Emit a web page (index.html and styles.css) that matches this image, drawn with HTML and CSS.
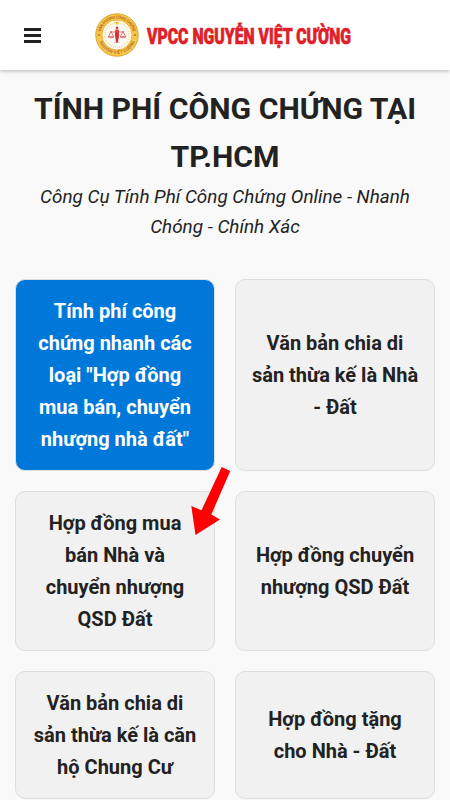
FILE: index.html
```html
<!DOCTYPE html>
<html lang="vi">
<head>
<meta charset="utf-8">
<meta name="viewport" content="width=device-width, initial-scale=1">
<title>Tính phí công chứng</title>
<link rel="stylesheet" href="styles.css">
</head>
<body>
<header class="header">
  <button class="menu" aria-label="Menu"><span></span><span></span><span></span></button>
  <a class="brand" href="#">
    <svg class="seal" viewBox="0 0 44 44">
      <defs>
        <path id="top" d="M5.600 22a16.400 16.400 0 0 1 32.800 0"/>
        <path id="bottom" d="M3.200 22a18.800 18.800 0 0 0 37.600 0"/>
      </defs>
      <circle cx="22" cy="22" r="21.200" fill="#f6c84c" stroke="#dda428" stroke-width="1"/>
      <circle cx="22" cy="22" r="15" fill="#fffdf5" stroke="#e2a52a" stroke-width=".8"/>
      <circle cx="22" cy="22" r="12.200" fill="none" stroke="#efe0a0" stroke-width="1.800" stroke-dasharray="1 1"/>
      <g class="seal-text">
        <text><textPath href="#top" startOffset="3" textLength="45">VĂN PHÒNG CÔNG CHỨNG</textPath></text>
        <text><textPath href="#bottom" startOffset="7" textLength="45">NGUYỄN VIỆT CƯỜNG</textPath></text>
      </g>
      <path d="M22 7.600l.7 1.600 1.700.1-1.300 1.100.4 1.700-1.500-.9-1.500.9.4-1.700-1.300-1.100 1.700-.1z" fill="#efc52f"/>
      <path d="M3 20.800l2.200 2.200M5.200 20.800L3 23M38.800 20.800l2.200 2.200m0-2.200L38.800 23" stroke="#b66a1d" stroke-width=".7"/>
      <g fill="#d92f36">
        <circle cx="22" cy="14.800" r="1.300"/>
        <path d="M20.300 16.500h3.400l.4 6-1.200 7h-1.800l-1.200-7z"/>
      </g>
      <path d="M15 18.600q3.500 1 7-.2 3.500 1.200 7 .2M16 18.700l-2.600 5M16 18.700l2.600 5M28 18.700l-2.600 5M28 18.700l2.600 5M13 23.700q3 2.600 6 0zM25 23.700q3 2.600 6 0z" fill="none" stroke="#df4b50" stroke-width=".8"/>
      <path d="M19.500 29.500h5" stroke="#e87778" stroke-width=".7"/>
    </svg>
    <svg class="wordmark" viewBox="0 0 206 44">
      <text x="1" y="31" textLength="204" lengthAdjust="spacingAndGlyphs">VPCC NGUYỄN VIỆT CƯỜNG</text>
    </svg>
  </a>
</header>
<main>
  <h1>TÍNH PHÍ CÔNG CHỨNG TẠI TP.HCM</h1>
  <p class="subtitle">Công Cụ Tính Phí Công Chứng Online - Nhanh Chóng - Chính Xác</p>
  <div class="grid">
    <a class="card active">Tính phí công chứng nhanh các loại "Hợp đồng mua bán, chuyển nhượng nhà đất"</a>
    <a class="card">Văn bản chia di sản thừa kế là Nhà - Đất</a>
    <a class="card">Hợp đồng mua bán Nhà và chuyển nhượng QSD Đất</a>
    <a class="card">Hợp đồng chuyển nhượng QSD Đất</a>
    <a class="card">Văn bản chia di sản thừa kế là căn hộ Chung Cư</a>
    <a class="card">Hợp đồng tặng cho Nhà - Đất</a>
    <svg class="arrow" viewBox="0 0 40 70"><path d="M31.700 0L40.300 4L21.300 47.500L30 52.500L5.500 68L1.300 39L11.500 43.200Z" fill="#fe0000"/></svg>
  </div>
</main>
</body>
</html>
```
FILE: styles.css
```css
* { box-sizing: border-box; }
body {
  margin: 0;
  height: 800px;
  overflow: hidden;
  background: #f9f9f9;
  color: #222;
  font-family: Roboto, sans-serif;
}
.header {
  display: flex;
  align-items: center;
  height: 70px;
  padding-left: 24px;
  background: #fff;
  box-shadow: 0 1px 4px rgba(0, 0, 0, .28);
}
.menu {
  display: flex;
  flex-direction: column;
  gap: 3px;
  width: 17px;
  margin: 0 53.500px 0 0;
  padding: 0;
  border: 0;
  background: none;
}
.menu span { height: 3px; background: #222; }
.brand { display: flex; align-items: center; gap: 7px; }
.seal { width: 44px; height: 44px; }
.seal-text { font: bold 4.200px Roboto, sans-serif; fill: #b96f22; }
.wordmark { width: 206px; height: 44px; overflow: visible; }
.wordmark text {
  font: 900 22.500px Roboto, sans-serif;
  fill: #df2029;
  stroke: #df2029;
  stroke-width: .7px;
}
main { padding: 15px; }
h1 {
  margin: 0;
  font-size: 30.200px;
  line-height: 48.400px;
  font-weight: 700;
  text-align: center;
}
.subtitle {
  margin: 0 0 36.400px;
  padding: 0 15px;
  font-size: 18.900px;
  line-height: 30.400px;
  font-style: italic;
  text-align: center;
}
.grid {
  position: relative;
  display: grid;
  grid-template-columns: 1fr 1fr;
  gap: 20px;
}
.card {
  display: flex;
  align-items: center;
  justify-content: center;
  padding: 15px;
  border: 1px solid #ddd;
  border-radius: 10px;
  background: #f1f1f1;
  font-size: 20px;
  line-height: 32px;
  font-weight: 700;
  text-align: center;
}
.active { background: #0078d9; color: #fff; }
.arrow {
  position: absolute;
  left: 175px;
  top: 188px;
  width: 40px;
  height: 70px;
  overflow: visible;
}
```
